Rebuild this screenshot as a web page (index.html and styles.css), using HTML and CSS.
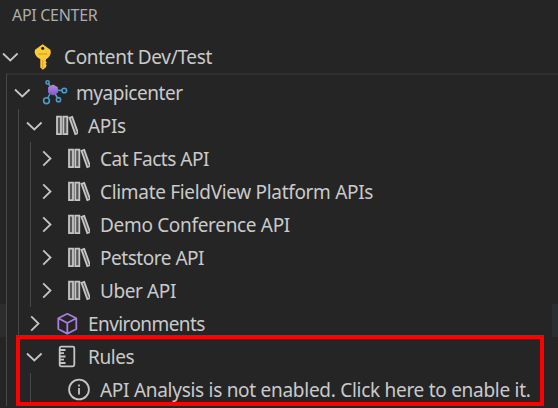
FILE: index.html
```html
<!DOCTYPE html>
<html lang="en">
<head>
<meta charset="utf-8">
<title>API Center</title>
<link rel="stylesheet" href="styles.css">
</head>
<body>
<svg class="defs" width="0" height="0">
  <symbol id="down" viewBox="0 0 20 20"><path d="M3 6.500l7.300 7L17.600 6.500"/></symbol>
  <symbol id="right" viewBox="0 0 20 20"><path d="M7.200 2.300l7.300 7.200-7.300 7.200"/></symbol>
  <symbol id="books" viewBox="0 0 24 24"><path d="M3 2.700h4v17.500H3zM9.300 2.700h4v17.500h-4zM15.500 3.900l2.700-.9 5.800 16-2.700 1z"/></symbol>
</svg>
<main class="panel">
  <h1 class="title">API CENTER</h1>
  <div class="tree">
    <div class="row root">
      <svg class="chev"><use href="#down"/></svg>
      <svg class="icon" viewBox="0 0 24 24"><path fill="#fbcb35" d="M12.700-.8l7.600 5.600c1.500 4-.8 7.600-4.300 9.400l-.3 2 1 1.200-1 1.500 1 1.300-1 2.300-2.800 2.300-2.600-2.300v-8.300C6.500 12.300 3.800 8.800 5 4.800z"/><path fill="#e3a51d" d="M8.500 8.200h8.400v1.600H8.500zM12 15h1.200v8H12z"/><circle cx="12.700" cy="3.300" r="1.600" fill="#252526"/></svg>
      <span class="label">Content Dev/Test</span>
    </div>
    <div class="group outer">
      <div class="row">
        <svg class="chev"><use href="#down"/></svg>
        <svg class="icon" viewBox="0 0 24 24"><defs><linearGradient id="hub" x2="0" y2="1"><stop stop-color="#b68be8"/><stop offset="1" stop-color="#7f58c4"/></linearGradient></defs><g fill="none" stroke="#4c9bc8" stroke-width="1.600"><path d="M11 9L6.500 3M10 9l-4.500 8.500M10 9l10 .5M11 9l4.500 8"/><circle cx="5.600" cy="1.400" r="1.600"/><circle cx="22.300" cy="9.500" r="2.300"/><circle cx="16.500" cy="18.700" r="2.100"/><circle cx="4.500" cy="19.700" r="2.900"/></g><path fill="url(#hub)" d="M11 3.600l4.900 2.700v5.400L11 14.400l-4.900-2.700V6.300z"/></svg>
        <span class="label tight">myapicenter</span>
      </div>
      <div class="group">
        <div class="row">
          <svg class="chev"><use href="#down"/></svg><svg class="icon line books"><use href="#books"/></svg><span class="label">APIs</span>
        </div>
        <div class="group">
          <div class="row"><svg class="chev"><use href="#right"/></svg><svg class="icon line books"><use href="#books"/></svg><span class="label tight">Cat Facts API</span></div>
          <div class="row"><svg class="chev"><use href="#right"/></svg><svg class="icon line books"><use href="#books"/></svg><span class="label">Climate FieldView Platform APIs</span></div>
          <div class="row"><svg class="chev"><use href="#right"/></svg><svg class="icon line books"><use href="#books"/></svg><span class="label">Demo Conference API</span></div>
          <div class="row"><svg class="chev"><use href="#right"/></svg><svg class="icon line books"><use href="#books"/></svg><span class="label tight">Petstore API</span></div>
          <div class="row"><svg class="chev"><use href="#right"/></svg><svg class="icon line books"><use href="#books"/></svg><span class="label snug">Uber API</span></div>
        </div>
        <div class="row">
          <svg class="chev"><use href="#right"/></svg>
          <svg class="icon cube" viewBox="0 0 24 24"><path d="M13.300 1.800l9 4.500v10.700l-9 4.700-9-4.700V6.300zM4.300 6.300l9 4.700 9-4.700M13.300 11v10.700"/></svg>
          <span class="label tighter">Environments</span>
        </div>
        <div class="row">
          <svg class="chev"><use href="#down"/></svg>
          <svg class="icon line" viewBox="0 0 24 24"><path d="M7.200 1.700h11.600q1.500 0 1.500 1.500v16.600q0 1.500-1.500 1.500H7.200q-1.500 0-1.500-1.500V3.200q0-1.500 1.500-1.500zM6 5h5.500M6 8.200h4M6 11.500h5.500M6 14.700h4M6 18h5.500"/></svg>
          <span class="label snug">Rules</span>
        </div>
        <div class="group">
          <div class="row">
            <span class="chev"></span>
            <svg class="icon line" viewBox="0 0 24 24"><circle cx="13" cy="11.500" r="9.900"/><path d="M13 10v6.500M13 6.500v2"/></svg>
            <span class="label info">API Analysis is not enabled. Click here to enable it.</span>
          </div>
        </div>
      </div>
    </div>
  </div>
  <div class="edge edge-left"></div>
  <div class="edge edge-right"></div>
  <div class="callout"></div>
</main>
</body>
</html>
```
FILE: styles.css
```css
* { box-sizing: border-box; }
body { margin: 0; background: #252526; color: #cacaca; font-family: "Noto Sans", sans-serif; }
.defs { position: absolute; }
.panel { position: relative; width: 558px; height: 408px; overflow: hidden; }
.title { margin: 0; height: 41px; padding: 3px 0 0 12px; font-size: 16px; line-height: 24px; font-weight: 400; letter-spacing: -.3px; color: #adadad; }
.row { display: flex; align-items: center; height: 33px; padding-left: 5px; }
.root { height: 32px; padding-left: 0; }
.chev { flex: none; width: 20px; height: 20px; margin-right: 10px; fill: none; stroke: #c5c5c5; stroke-width: 1.800; }
.icon { flex: none; width: 24px; height: 24px; margin-right: 10px; overflow: visible; }
.line, .cube { fill: none; stroke: #c5c5c5; stroke-width: 1.800; }
.books { fill: #5a5656; }
.cube { stroke: #a87fdc; stroke-linejoin: round; }
.label { font-size: 19px; line-height: 33px; white-space: nowrap; letter-spacing: -.32px; }
.group .label { padding-top: 2px; }
.snug { letter-spacing: -.4px; }
.tight { letter-spacing: -.47px; }
.tighter { letter-spacing: -.58px; }
.info { letter-spacing: -.28px; }
.group { margin-left: 11px; border-left: 1px solid #484848; }
.outer { margin-left: 6px; border-top: 2px solid #303031; padding-top: 1px; }
.edge { position: absolute; top: 304px; width: 6px; height: 33px; background: #2b2d2f; }
.edge-left { left: 0; }
.edge-right { right: 0; }
.callout { position: absolute; left: 16px; top: 335px; width: 528px; height: 71px; border: 4px solid #f00; }
```
